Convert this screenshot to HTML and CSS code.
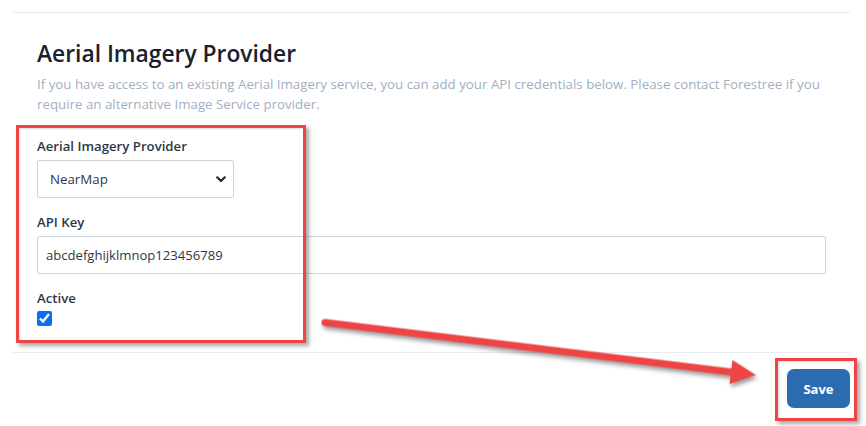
FILE: index.html
```html
<!DOCTYPE html>
<html lang="en">
<head>
<meta charset="utf-8">
<title>Aerial Imagery Provider</title>
<link rel="stylesheet" href="styles.css">
</head>
<body>
<div class="card">
  <section class="body">
    <h2 class="title">Aerial Imagery Provider</h2>
    <p class="desc">If you have access to an existing Aerial Imagery service, you can add your API credentials below. Please contact Forestree if you require an alternative Image Service provider.</p>
    <form class="form">
      <div class="group">
        <label class="label" for="provider">Aerial Imagery Provider</label>
        <div class="select-wrap">
          <select id="provider" class="select">
            <option>NearMap</option>
          </select>
          <svg class="chev" width="10" height="7" viewBox="0 0 10 7"><path d="M1.2 1.3 L5 5 L8.8 1.3" fill="none" stroke="#1f2733" stroke-width="2.2" stroke-linecap="round" stroke-linejoin="round"/></svg>
        </div>
      </div>
      <div class="group">
        <label class="label" for="key">API Key</label>
        <input id="key" class="input" type="text" value="abcdefghijklmnop123456789">
      </div>
      <div class="group last">
        <label class="label" for="active">Active</label>
        <input id="active" class="check" type="checkbox" checked>
      </div>
    </form>
  </section>
  <footer class="footer">
    <button class="save" type="button">Save</button>
  </footer>
</div>

<div class="annot-box box-form"></div>
<div class="annot-box box-save"></div>
<svg class="annot-arrow" width="866" height="426" viewBox="0 0 866 426">
  <g class="arrow-shape" transform="translate(325 322.5) rotate(6.95)">
    <line x1="0" y1="0" x2="414" y2="0" stroke="#ef4444" stroke-width="7" stroke-linecap="round"/>
    <polygon points="409,-12 434,0 409,12" fill="#ef4444"/>
  </g>
</svg>
</body>
</html>
```
FILE: styles.css
```css
* { box-sizing: border-box; }
html, body { margin: 0; padding: 0; background: #ffffff; }
body {
  font-family: "Open Sans", "Noto Sans", sans-serif;
  color: #2d3748;
  width: 866px;
  height: 426px;
  overflow: hidden;
  position: relative;
}
.card {
  margin: 12px 16px 0 13px;
  border-top: 1px solid #e8edf2;
}
.body {
  padding: 25px 24px 26px;
}
.title {
  margin: 0;
  font-size: 22.8px;
  line-height: 32px;
  font-weight: 600;
  color: #1a202c;
}
.desc {
  margin: 4px 0 22px;
  font-size: 13.3px;
  line-height: 20px;
  color: #a1afc2;
}
.form { display: flex; flex-direction: column; gap: 14px; }
.group { display: flex; flex-direction: column; align-items: flex-start; }
.label {
  font-size: 13.2px;
  line-height: 20px;
  font-weight: 600;
  color: #2d3748;
  margin-bottom: 4px;
}
.group.last .label { margin-bottom: 3px; }
.select-wrap { position: relative; width: 197px; }
.select {
  appearance: none;
  -webkit-appearance: none;
  width: 197px;
  height: 38px;
  border: 1px solid #cbd5e0;
  border-radius: 2px;
  background: #fff;
  padding: 0 28px 0 12px;
  font-family: inherit;
  font-size: 13.3px;
  color: #2d3748;
  outline: none;
}
.chev { position: absolute; right: 8px; top: 16px; pointer-events: none; }
.input {
  width: 100%;
  height: 38px;
  border: 1px solid #cbd5e0;
  border-radius: 2px;
  padding: 0 8px;
  font-family: inherit;
  font-size: 13.1px;
  color: #2d3748;
  outline: none;
}
.check {
  margin: 0;
  width: 15px;
  height: 15px;
  accent-color: #0b6ef5;
}
.footer {
  border-top: 1px solid #e8edf2;
  padding-top: 16px;
  display: flex;
  justify-content: flex-end;
}
.save {
  width: 63px;
  height: 39px;
  border: none;
  border-radius: 7px;
  background: #2b6cb0;
  color: #fff;
  font-family: inherit;
  font-size: 13px;
  font-weight: 700;
  cursor: pointer;
}
.annot-box {
  position: absolute;
  border: 3px solid #ef4444;
  box-shadow: 3px 3px 4px rgba(0,0,0,0.35), inset 1px 1px 2px rgba(0,0,0,0.15);
  pointer-events: none;
}
.box-form { left: 16px; top: 125px; width: 290px; height: 218px; }
.box-save { left: 775px; top: 358px; width: 82px; height: 63px; }
.annot-arrow {
  position: absolute;
  left: 0;
  top: 0;
  pointer-events: none;
}
.arrow-shape { filter: drop-shadow(2px 3px 2px rgba(0,0,0,0.4)); }
```
